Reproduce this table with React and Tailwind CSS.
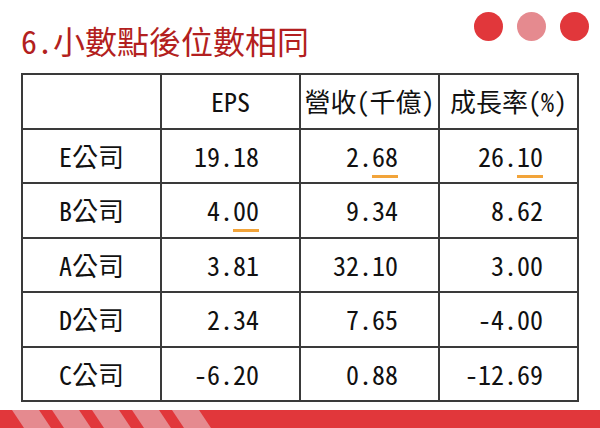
import React from "react";

const rows = [
  { name: "E公司", eps: ["19.", "18", false], rev: ["2.", "68", true], growth: ["26.", "10", true] },
  { name: "B公司", eps: ["4.", "00", true], rev: ["9.", "34", false], growth: ["8.", "62", false] },
  { name: "A公司", eps: ["3.", "81", false], rev: ["32.", "10", false], growth: ["3.", "00", false] },
  { name: "D公司", eps: ["2.", "34", false], rev: ["7.", "65", false], growth: ["-4.", "00", false] },
  { name: "C公司", eps: ["-6.", "20", false], rev: ["0.", "88", false], growth: ["-12.", "69", false] },
];

const Num = ({ value }) => {
  const [head, tail, marked] = value;
  return (
    <span>
      {head}
      <span
        className={
          marked
            ? "underline decoration-[#f2a43a] decoration-[3px] underline-offset-[8px]"
            : ""
        }
      >
        {tail}
      </span>
    </span>
  );
};

const Stripes = () => (
  <svg width="600" height="18" viewBox="0 0 600 18" className="block">
    <rect x="0" y="0" width="600" height="18" fill="#e1373b" />
    {[0, 1, 2, 3, 4].map((i) => {
      const x = 12 + i * 40;
      return (
        <polygon
          key={i}
          points={`${x},0 ${x + 27},0 ${x + 39},18 ${x + 12},18`}
          fill="#e58a8f"
        />
      );
    })}
  </svg>
);

const App = () => {
  const cell = "border-2 border-[#3a3a3a] h-[54.5px] p-0";
  return (
    <div
      className="w-[600px] h-[428px] bg-white flex flex-col overflow-hidden"
      style={{ fontFamily: '"Noto Sans Mono CJK TC", "Noto Sans CJK TC", sans-serif' }}
    >
      <div className="h-[73px] flex justify-between">
        <h1 className="pl-[21px] pt-[20px] text-[32px] leading-[40px] text-[#b31f20]">
          6.小數點後位數相同
        </h1>
        <div className="flex gap-[14px] pt-[12px] pr-[11px]">
          <span className="w-[29px] h-[29px] rounded-full bg-[#e1373b]" />
          <span className="w-[29px] h-[29px] rounded-full bg-[#e58a8f]" />
          <span className="w-[29px] h-[29px] rounded-full bg-[#e1373b]" />
        </div>
      </div>

      <table className="ml-[21px] w-[558px] border-collapse table-fixed text-[26px] leading-none text-[#111]">
        <thead>
          <tr>
            <th className={cell}></th>
            <th className={`${cell} font-normal`}>EPS</th>
            <th className={`${cell} font-normal whitespace-nowrap`}>營收(千億)</th>
            <th className={`${cell} font-normal`}>成長率(%)</th>
          </tr>
        </thead>
        <tbody>
          {rows.map((r) => (
            <tr key={r.name}>
              <td className={`${cell} text-center`}>{r.name}</td>
              <td className={`${cell} text-right pr-[40px]`}>
                <Num value={r.eps} />
              </td>
              <td className={`${cell} text-right pr-[40px]`}>
                <Num value={r.rev} />
              </td>
              <td className={`${cell} text-right pr-[34px]`}>
                <Num value={r.growth} />
              </td>
            </tr>
          ))}
        </tbody>
      </table>

      <div className="mt-auto">
        <Stripes />
      </div>
    </div>
  );
};

export default App;
